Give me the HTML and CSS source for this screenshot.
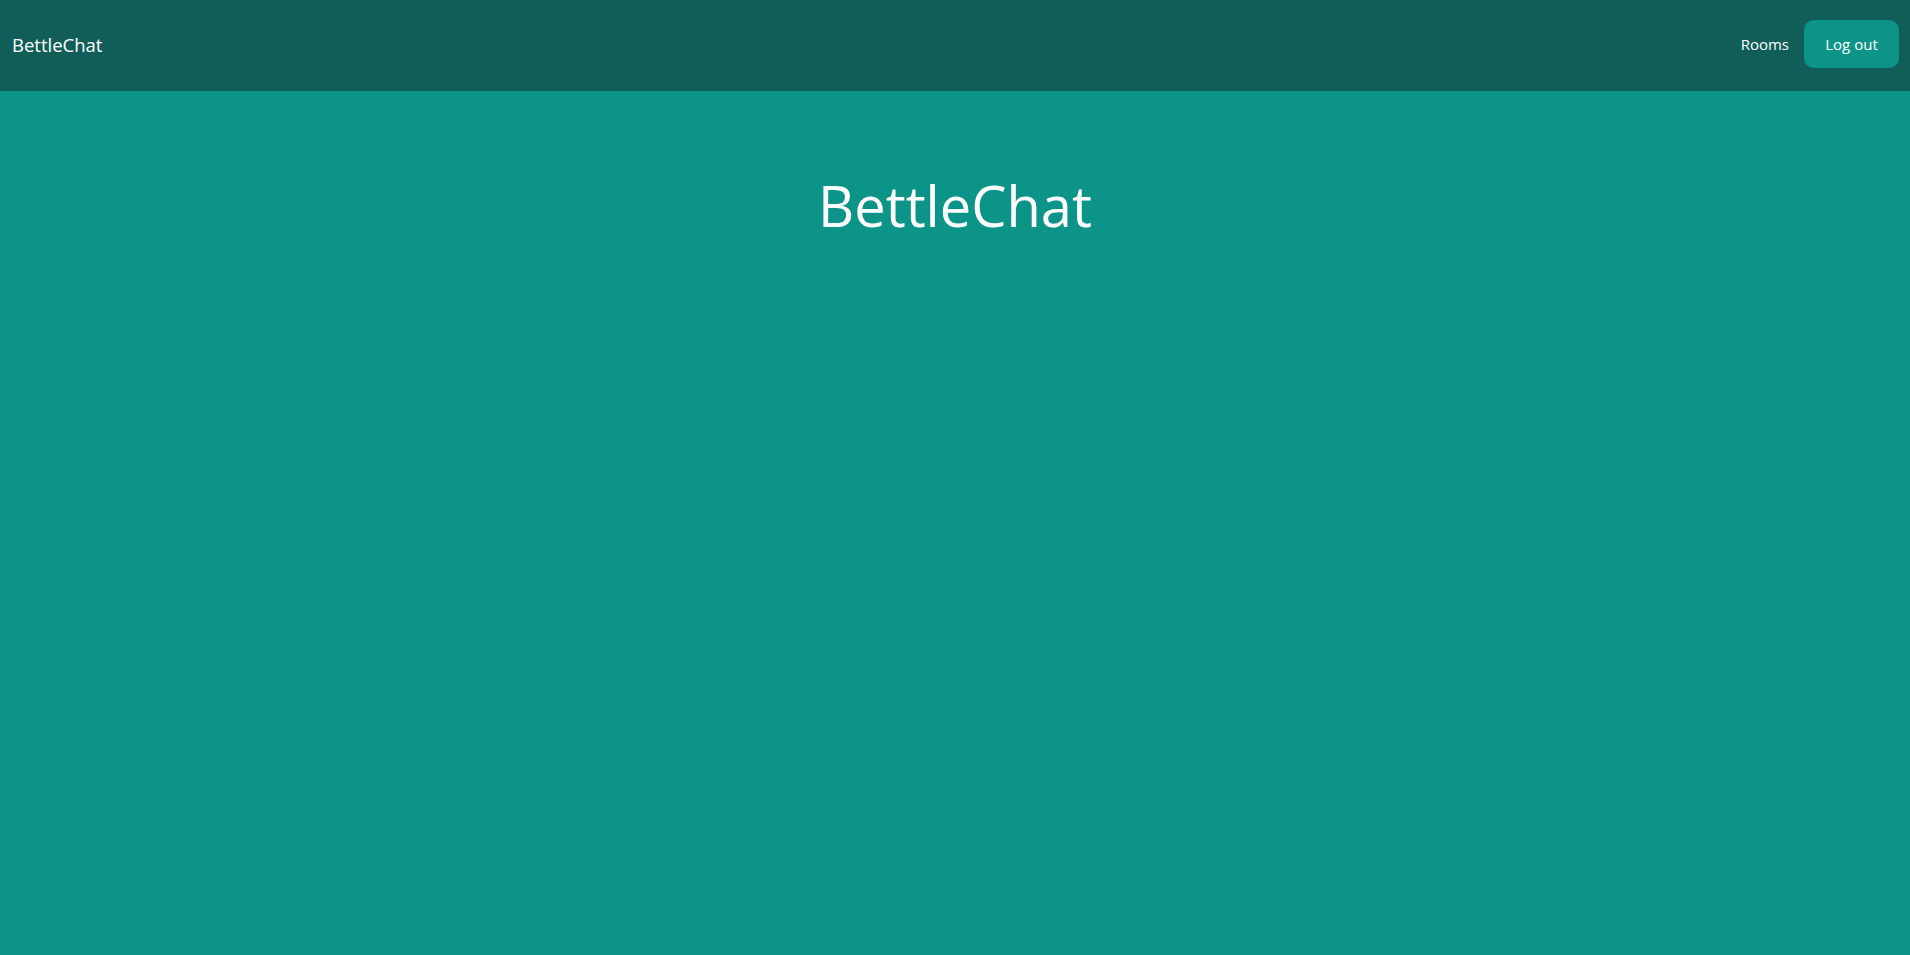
FILE: index.html
```html
<!DOCTYPE html>
<html lang="en">
<head>
<meta charset="utf-8">
<title>BettleChat</title>
<link rel="stylesheet" href="styles.css">
</head>
<body>
<header class="navbar">
  <a class="brand" href="#">BettleChat</a>
  <nav class="nav">
    <a class="nav-link" href="#">Rooms</a>
    <button class="logout">Log out</button>
  </nav>
</header>
<main class="main">
  <h1 class="title">BettleChat</h1>
</main>
</body>
</html>
```

FILE: styles.css
```css
* { box-sizing: border-box; }
html, body { height: 100%; }
body {
  margin: 0;
  background: #0d9488;
  color: #ffffff;
  font-family: "Open Sans", "Noto Sans", sans-serif;
}
.navbar {
  height: 91px;
  background: #115e59;
  display: flex;
  align-items: center;
  justify-content: space-between;
  padding: 0 11px 3px 12px;
}
.brand {
  color: #fff;
  text-decoration: none;
  font-size: 18.5px;
}
.nav {
  display: flex;
  align-items: center;
  gap: 15px;
}
.nav-link {
  color: #fff;
  text-decoration: none;
  font-size: 15px;
}
.logout {
  background: #0d9488;
  color: #fff;
  border: none;
  border-radius: 10px;
  height: 48px;
  width: 95px;
  font-family: inherit;
  font-size: 15px;
  cursor: pointer;
}
.main {
  display: flex;
  flex-direction: column;
  align-items: center;
  padding-top: 86px;
}
.title {
  margin: 0;
  font-weight: 400;
  font-size: 56px;
  line-height: 1;
}
```
